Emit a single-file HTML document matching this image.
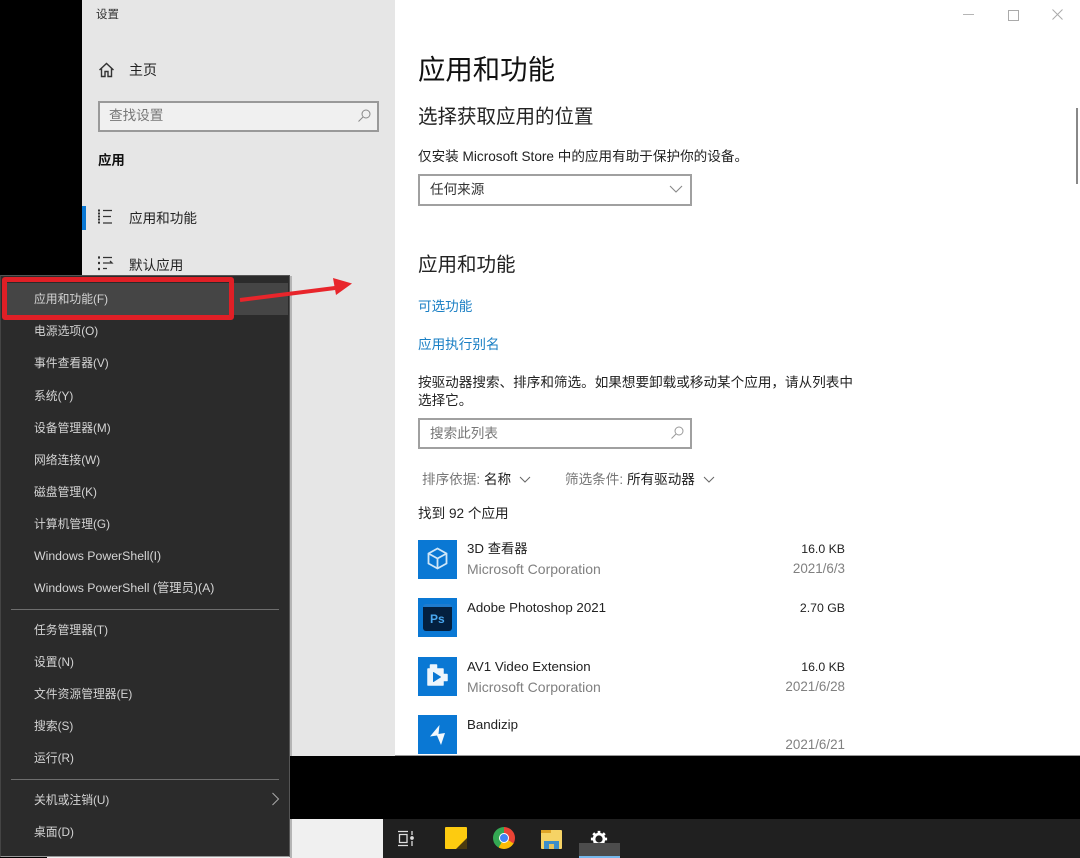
<!DOCTYPE html>
<html><head><meta charset="utf-8">
<style>
html,body{margin:0;padding:0;background:#000;}
body{width:1080px;height:858px;position:relative;overflow:hidden;font-family:"Liberation Sans","Noto Sans CJK SC",sans-serif;font-size:13.6px;color:#222;}
.a{position:absolute;}
.t{position:absolute;white-space:nowrap;line-height:20px;}
.m{position:absolute;left:34px;white-space:nowrap;line-height:18px;font-size:11.8px;color:#d4d4d4;}
.sep{position:absolute;left:11px;width:268px;height:1px;background:#6e6e6e;}
.ic{position:absolute;left:418px;width:39px;height:39px;background:#0a78d4;}
.s{position:absolute;right:235px;white-space:nowrap;line-height:20px;font-size:12.300px;color:#222;}
.d{position:absolute;right:235px;white-space:nowrap;line-height:20px;font-size:13.400px;color:#808080;}
.p{position:absolute;left:467px;white-space:nowrap;line-height:20px;font-size:14px;color:#808080;}
.n{position:absolute;left:467px;white-space:nowrap;line-height:20px;font-size:13.300px;color:#222;}
</style></head>
<body>
<div class="a" style="left:82px;top:0;width:313px;height:756px;background:#e6e6e6"></div>
<div class="a" style="left:395px;top:0;width:685px;height:756px;background:#fff"></div>

<div class="t" style="left:96px;top:5px;font-size:11.500px;color:#333">设置</div>
<svg class="a" style="left:98px;top:61px" width="18" height="18" viewBox="0 0 18 18" fill="none" stroke="#333" stroke-width="1.400"><path d="M1.500 9 8.500 2.500 15.500 9M3.500 7.500V15.500H7V10.500H10V15.500H13.500V7.500"/></svg>
<div class="t" style="left:129px;top:60px;font-size:14px;color:#222">主页</div>
<div class="a" style="left:98px;top:101px;width:277px;height:27px;background:#f0f0f0;border:2px solid #999"></div>
<div class="t" style="left:109px;top:106px;color:#777">查找设置</div>
<svg class="a" style="left:357px;top:108px" width="15" height="15" viewBox="0 0 15 15" fill="none" stroke="#888" stroke-width="1"><circle cx="9" cy="6" r="4"/><path d="M6 9 1.500 13.500"/></svg>
<div class="t" style="left:98px;top:151px;font-weight:bold;color:#111;font-size:13.400px">应用</div>
<div class="a" style="left:82px;top:206px;width:4px;height:24px;background:#0a78d4"></div>
<svg class="a" style="left:97px;top:209px" width="17" height="17" viewBox="0 0 17 17" fill="none" stroke="#333" stroke-width="1.300"><path d="M1 1.500H3M1 4.500H3M1 7.500H3M1 10.500H3M1 13.500H3" stroke-width="2"/><path d="M6 1.500H15M6 7.500H14M6 14H15"/></svg>
<div class="t" style="left:129px;top:209px">应用和功能</div>
<svg class="a" style="left:97px;top:256px" width="17" height="16" viewBox="0 0 17 16" fill="none" stroke="#333" stroke-width="1.300"><path d="M1 1.500H3M1 7H3M1 13H3" stroke-width="2.200"/><path d="M6 1.500H15M6 7H15L13 5M6 12.500H10"/></svg>
<div class="t" style="left:129px;top:256px">默认应用</div>

<!-- window controls -->
<div class="a" style="left:963px;top:14px;width:11px;height:1px;background:#b5b5b5"></div>
<div class="a" style="left:1008px;top:10px;width:9px;height:9px;border:1px solid #aaa"></div>
<svg class="a" style="left:1052px;top:9px" width="11" height="11" viewBox="0 0 11 11" stroke="#aaa" stroke-width="1"><path d="M.5.5 10.500 10.500M10.500.5.5 10.500"/></svg>
<div class="a" style="left:1076px;top:108px;width:2px;height:76px;background:#888"></div>

<!-- content -->
<div class="t" style="left:418px;top:50px;font-size:27.400px;line-height:40px;color:#111">应用和功能</div>
<div class="t" style="left:418px;top:104px;font-size:19.500px;line-height:26px;color:#222">选择获取应用的位置</div>
<div class="t" style="left:418px;top:147px;color:#222">仅安装 Microsoft Store 中的应用有助于保护你的设备。</div>
<div class="a" style="left:418px;top:174px;width:270px;height:28px;background:#fff;border:2px solid #a0a0a0"></div>
<div class="t" style="left:430px;top:180px;color:#333">任何来源</div>
<svg class="a" style="left:669px;top:185px" width="14" height="9" viewBox="0 0 14 9" fill="none" stroke="#888" stroke-width="1.100"><path d="M1 1 7 7 13 1"/></svg>
<div class="t" style="left:418px;top:252px;font-size:19.500px;line-height:26px;color:#222">应用和功能</div>
<div class="t" style="left:418px;top:297px;color:#1a7fc4">可选功能</div>
<div class="t" style="left:418px;top:335px;color:#1a7fc4">应用执行别名</div>
<div class="t" style="left:418px;top:374px;line-height:18px;color:#222">按驱动器搜索、排序和筛选。如果想要卸载或移动某个应用，请从列表中<br>选择它。</div>
<div class="a" style="left:418px;top:418px;width:270px;height:27px;background:#fff;border:2px solid #a0a0a0"></div>
<div class="t" style="left:430px;top:424px;color:#777">搜索此列表</div>
<svg class="a" style="left:670px;top:425px" width="15" height="15" viewBox="0 0 15 15" fill="none" stroke="#999" stroke-width="1"><circle cx="9" cy="6" r="4"/><path d="M6 9 1.500 13.500"/></svg>
<div class="t" style="left:422px;top:470px;color:#777">排序依据: <span style="color:#222">名称</span></div>
<svg class="a" style="left:519px;top:476px" width="12" height="8" viewBox="0 0 12 8" fill="none" stroke="#666" stroke-width="1"><path d="M1 1 6 6 11 1"/></svg>
<div class="t" style="left:565px;top:470px;color:#777">筛选条件: <span style="color:#222">所有驱动器</span></div>
<svg class="a" style="left:703px;top:476px" width="12" height="8" viewBox="0 0 12 8" fill="none" stroke="#666" stroke-width="1"><path d="M1 1 6 6 11 1"/></svg>
<div class="t" style="left:418px;top:504px;color:#222">找到 92 个应用</div>

<!-- apps -->
<div class="ic" style="top:540px"></div>
<svg class="a" style="left:425px;top:546px" width="25" height="25" viewBox="0 0 25 25" fill="none" stroke="#cfe6f8" stroke-width="1.800"><path d="M12.500 2.500 21.500 7.500V17.500L12.500 22.500 3.500 17.500V7.500ZM3.500 7.500 12.500 12.500 21.500 7.500M12.500 12.500V22.500"/></svg>
<div class="n" style="top:539px">3D 查看器</div>
<div class="p" style="top:559px">Microsoft Corporation</div>
<div class="s" style="top:539px">16.0 KB</div>
<div class="d" style="top:559px">2021/6/3</div>

<div class="ic" style="top:598px"></div>
<div class="a" style="left:423px;top:604px;width:29px;height:27px;background:#04203f;border-radius:3px;border-top:3px solid #1f7ccf;box-sizing:border-box"></div>
<div class="t" style="left:430px;top:609px;font-size:12px;font-weight:bold;color:#4aa8f0">Ps</div>
<div class="n" style="top:598px">Adobe Photoshop 2021</div>
<div class="s" style="top:598px">2.70 GB</div>

<div class="ic" style="top:657px"></div>
<svg class="a" style="left:425px;top:662px" width="26" height="26" viewBox="0 0 26 26"><path fill="#eef6fc" stroke="#eef6fc" stroke-width="1.500" stroke-linejoin="round" d="M3 7H5.500V3H11.500V7H18V12.500H22V18.500H18V23H3Z"/><path fill="#0a78d4" stroke="#0a78d4" stroke-linejoin="round" d="M8.500 10.500 15.500 15 8.500 19.500Z"/></svg>
<div class="n" style="top:657px">AV1 Video Extension</div>
<div class="p" style="top:677px">Microsoft Corporation</div>
<div class="s" style="top:657px">16.0 KB</div>
<div class="d" style="top:677px">2021/6/28</div>

<div class="ic" style="top:715px"></div>
<svg class="a" style="left:430px;top:725px" width="16" height="21" viewBox="0 0 16 21"><path fill="#f2f8fd" d="M9.500 0 0 11.500 7 10.500 11 20 15 8 8.500 9Z"/></svg>
<div class="n" style="top:715px">Bandizip</div>
<div class="d" style="top:735px">2021/6/21</div>
<div class="a" style="left:395px;top:755px;width:685px;height:1px;background:#999"></div>

<!-- taskbar -->
<div class="a" style="left:47px;top:819px;width:336px;height:39px;background:#f0f0f0"></div>
<div class="a" style="left:383px;top:819px;width:697px;height:39px;background:#202020"></div>
<svg class="a" style="left:397px;top:830px" width="18" height="17" viewBox="0 0 18 17" fill="none" stroke="#ddd" stroke-width="1.300"><path d="M1 1.500H11M1 15.500H11M2.500 4.500H10V12.500H2.500ZM15 1V5M15 11V16"/><circle cx="15" cy="8" r="1.200" fill="#ddd"/></svg>
<div class="a" style="left:445px;top:827px;width:22px;height:22px;background:#fdcb10;border-radius:1px"></div>
<div class="a" style="left:456px;top:838px;width:11px;height:11px;background:#4a3a10;clip-path:polygon(100% 0,100% 100%,0 100%)"></div>
<div class="a" style="left:493px;top:827px;width:22px;height:22px;border-radius:50%;background:conic-gradient(#ea4335 0 33%,#fbbc05 33% 58%,#34a853 58% 100%)"></div>
<div class="a" style="left:499px;top:833px;width:10px;height:10px;border-radius:50%;background:#4285f4;border:1px solid #fff;box-sizing:border-box"></div>
<div class="a" style="left:541px;top:830px;width:21px;height:19px;background:#f6d365;border-radius:1px"></div>
<div class="a" style="left:541px;top:830px;width:10px;height:3px;background:#dfa527"></div>
<div class="a" style="left:544px;top:841px;width:15px;height:8px;background:#3d8ec9"></div>
<div class="a" style="left:549px;top:844px;width:5px;height:5px;background:#e8c35a"></div>
<svg class="a" style="left:590px;top:830px" width="18" height="18" viewBox="0 0 20 20" fill="none"><circle cx="10" cy="10" r="5.500" stroke="#fff" stroke-width="3"/><path stroke="#fff" stroke-width="3" d="M10 1V4M10 16V19M1 10H4M16 10H19M3.600 3.600 5.700 5.700M14.300 14.300 16.400 16.400M3.600 16.400 5.700 14.300M14.300 5.700 16.400 3.600"/></svg>
<div class="a" style="left:579px;top:843px;width:41px;height:15px;background:#4c4c4c"></div>
<div class="a" style="left:579px;top:856px;width:41px;height:2px;background:#76b9ed"></div>

<!-- context menu -->
<div class="a" style="left:290px;top:276px;width:2px;height:480px;background:#b5b5b5"></div>
<div class="a" style="left:290px;top:819px;width:2px;height:39px;background:#b5b5b5"></div>
<div class="a" style="left:0;top:275px;width:290px;height:582px;background:#2b2b2b;border:1px solid #555;border-bottom-color:#999;border-left:1px solid #444;box-sizing:border-box"></div>
<div class="a" style="left:4px;top:283px;width:284px;height:32px;background:#454545"></div>
<div class="a" style="left:2px;top:277px;width:232px;height:43px;border:5px solid #e01f26;box-sizing:border-box;border-radius:3px;"></div>
<div class="m" style="top:290px">应用和功能(F)</div>
<div class="m" style="top:322px">电源选项(O)</div>
<div class="m" style="top:354px">事件查看器(V)</div>
<div class="m" style="top:387px">系统(Y)</div>
<div class="m" style="top:419px">设备管理器(M)</div>
<div class="m" style="top:451px">网络连接(W)</div>
<div class="m" style="top:483px">磁盘管理(K)</div>
<div class="m" style="top:515px">计算机管理(G)</div>
<div class="m" style="top:547px;font-size:12.300px">Windows PowerShell(I)</div>
<div class="m" style="top:579px;font-size:12.300px">Windows PowerShell (管理员)(A)</div>
<div class="sep" style="top:609px"></div>
<div class="m" style="top:621px">任务管理器(T)</div>
<div class="m" style="top:653px">设置(N)</div>
<div class="m" style="top:685px">文件资源管理器(E)</div>
<div class="m" style="top:717px">搜索(S)</div>
<div class="m" style="top:749px">运行(R)</div>
<div class="sep" style="top:779px"></div>
<div class="m" style="top:791px">关机或注销(U)</div>
<svg class="a" style="left:271px;top:792px" width="9" height="14" viewBox="0 0 9 14" fill="none" stroke="#aaa" stroke-width="1"><path d="M1.500 1 7.500 7 1.500 13"/></svg>
<div class="m" style="top:823px">桌面(D)</div>

<!-- arrow -->
<svg class="a" style="left:238px;top:275px" width="116" height="30" viewBox="0 0 116 30"><path d="M2 25 97 13" stroke="#e8252b" stroke-width="4" fill="none"/><path d="M114 8.500 95 3 98 20Z" fill="#e8252b"/></svg>
</body></html>
